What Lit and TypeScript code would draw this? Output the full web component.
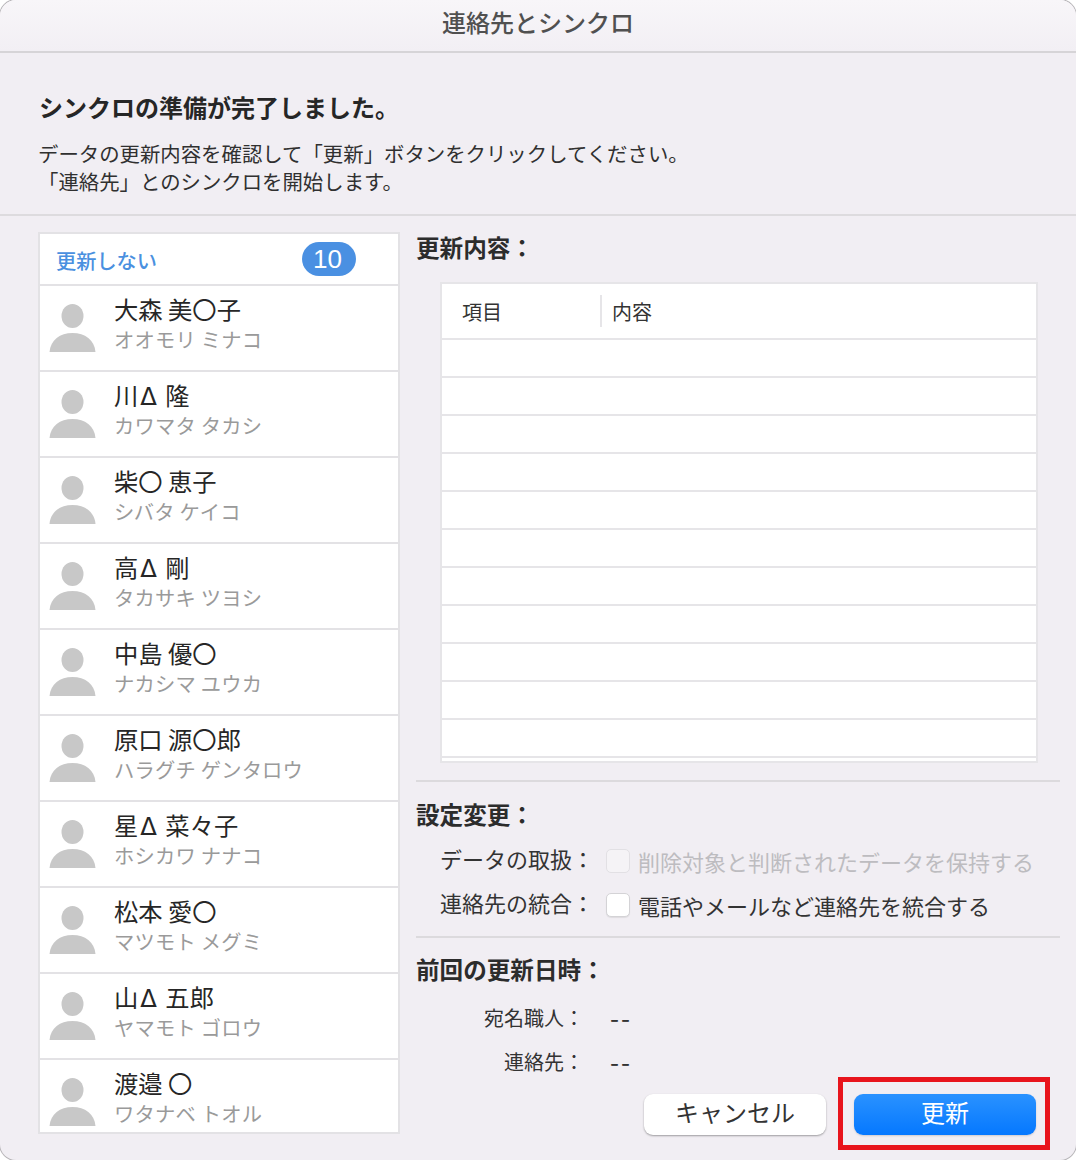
import { LitElement, html, css } from "lit";
import { customElement } from "lit/decorators.js";

const CONTACTS = [
  ["大森 美〇子", "オオモリ ミナコ"],
  ["川Δ 隆", "カワマタ タカシ"],
  ["柴〇 恵子", "シバタ ケイコ"],
  ["高Δ 剛", "タカサキ ツヨシ"],
  ["中島 優〇", "ナカシマ ユウカ"],
  ["原口 源〇郎", "ハラグチ ゲンタロウ"],
  ["星Δ 菜々子", "ホシカワ ナナコ"],
  ["松本 愛〇", "マツモト メグミ"],
  ["山Δ 五郎", "ヤマモト ゴロウ"],
  ["渡邉 〇", "ワタナベ トオル"],
];

@customElement("app-root")
export class AppRoot extends LitElement {
  static styles = css`
    :host {
      display: block;
      width: 1076px;
      height: 1160px;
      overflow: hidden;
      background: #fff;
      font-family: "Noto Sans CJK JP", "Liberation Sans", sans-serif;
      color: #262626;
    }
    .win {
      width: 1076px;
      height: 1160px;
      box-sizing: border-box;
      background: #f1eef3;
      border-radius: 16px;
      box-shadow: 0 0 0 1px #b8b6b9;
      overflow: hidden;
      display: flex;
      flex-direction: column;
    }
    .title {
      height: 53px;
      flex: none;
      box-sizing: border-box;
      border-bottom: 2px solid #d6d4d7;
      background: linear-gradient(#f8f6f9, #f2eff4);
      display: flex;
      align-items: center;
      justify-content: center;
      padding-bottom: 9px;
      font-size: 24px;
      font-weight: 500;
      color: #505050;
    }
    .intro {
      height: 163px;
      flex: none;
      box-sizing: border-box;
      padding: 40px 0 0 38px;
      border-bottom: 2px solid #dddbde;
    }
    .intro h1 {
      margin: 0 0 18px 1px;
      font-size: 24px;
      line-height: 28px;
      font-weight: 700;
      color: #262626;
    }
    .intro p {
      margin: 0;
      font-size: 20.4px;
      line-height: 28px;
      color: #303030;
    }
    .main {
      flex: 1;
      min-height: 0;
      display: flex;
      padding: 16px 16px 0 38px;
      gap: 16px;
    }
    .list {
      width: 362px;
      height: 902px;
      flex: none;
      box-sizing: border-box;
      border: 2px solid #e3e2e5;
      background: #fff;
      display: flex;
      flex-direction: column;
      overflow: hidden;
    }
    .list-head {
      height: 52px;
      flex: none;
      box-sizing: border-box;
      border-bottom: 2px solid #e3e2e5;
      padding: 0 42px 0 16px;
      display: flex;
      align-items: center;
      justify-content: space-between;
      font-size: 20.2px;
      font-weight: 500;
      color: #4a90e0;
    }
    .head-label {
      position: relative;
      top: 1px;
    }
    .badge {
      width: 54px;
      height: 34px;
      box-sizing: border-box;
      padding: 1px 3px 0 0;
      border-radius: 17px;
      background: #4a90e2;
      color: #fff;
      display: flex;
      align-items: center;
      justify-content: center;
      font-family: "Liberation Sans", sans-serif;
      font-weight: 400;
      font-size: 26px;
    }
    .row {
      height: 86px;
      flex: none;
      box-sizing: border-box;
      border-bottom: 2px solid #e3e2e5;
      display: flex;
      padding: 6px 0 0 9px;
      gap: 18px;
    }
    .row:last-child {
      border-bottom: 0;
    }
    .avatar {
      width: 47px;
      height: 48px;
      margin-top: 12px;
      flex: none;
    }
    .name {
      font-size: 24.3px;
      line-height: 34px;
      height: 34px;
      color: #262626;
    }
    .tri {
      font-family: "DejaVu Sans", sans-serif;
      line-height: 0;
      margin: 0 3px 0 2px;
    }
    .kana {
      font-size: 20.3px;
      line-height: 26px;
      color: #9a9a9a;
      letter-spacing: 0.2px;
    }
    .right {
      flex: 1;
      min-width: 0;
      display: flex;
      flex-direction: column;
    }
    h2 {
      margin: 0;
      font-size: 23.6px;
      line-height: 30px;
      font-weight: 700;
      color: #2c2c2c;
    }
    .table {
      margin: 20px 22px 0 24px;
      height: 481px;
      flex: none;
      box-sizing: border-box;
      border: 2px solid #e6e5e8;
      background: #fff;
      overflow: hidden;
    }
    .thead {
      height: 56px;
      box-sizing: border-box;
      border-bottom: 2px solid #e6e5e8;
      display: flex;
      align-items: center;
      font-size: 20px;
      color: #333;
    }
    .th1 {
      width: 160px;
      box-sizing: border-box;
      height: 32px;
      padding-left: 20px;
      border-right: 2px solid #e6e5e8;
      display: flex;
      align-items: center;
    }
    .th2 {
      padding-left: 10px;
    }
    .trow {
      height: 38px;
      box-sizing: border-box;
      border-bottom: 2px solid #e6e5e8;
    }
    .sep {
      height: 2px;
      flex: none;
      background: #dcdadd;
      margin-top: 17px;
    }
    .settings {
      padding-top: 17px;
    }
    .opts {
      margin-top: 10px;
    }
    .opt {
      display: flex;
      align-items: center;
      height: 44px;
      font-size: 22px;
      color: #333;
    }
    .opt .lab {
      width: 190px;
      padding-left: 24px;
      box-sizing: border-box;
      flex: none;
      white-space: nowrap;
      position: relative;
      top: -3px;
    }
    .opt .txt {
      margin-left: 8px;
      white-space: nowrap;
    }
    .box {
      width: 24px;
      height: 24px;
      box-sizing: border-box;
      border-radius: 5px;
      background: #fff;
      border: 1px solid #d4d3d6;
      box-shadow: 0 1px 1px rgba(0, 0, 0, 0.08);
      flex: none;
    }
    .dis .box {
      background: #f5f3f6;
      border-color: #e2e0e4;
      box-shadow: none;
    }
    .dis .txt {
      color: #bdbcc0;
    }
    .sep2 {
      height: 2px;
      flex: none;
      background: #dcdadd;
      margin-top: 9px;
    }
    .last {
      padding-top: 16px;
    }
    .kvs {
      margin-top: 11px;
    }
    .kv {
      display: flex;
      height: 44px;
      align-items: center;
      font-size: 20px;
      color: #333;
    }
    .kv .k {
      width: 168px;
      flex: none;
      text-align: right;
      white-space: nowrap;
    }
    .kv .v {
      margin-left: 26px;
      font-size: 26px;
      letter-spacing: 2px;
      line-height: 1;
    }
    .btns {
      position: relative;
      display: flex;
      justify-content: flex-end;
      gap: 28px;
      padding-right: 24px;
      margin-top: 11px;
    }
    .btn {
      width: 182px;
      height: 41px;
      border-radius: 9px;
      display: flex;
      align-items: center;
      justify-content: center;
      padding-bottom: 7px;
      font-size: 24px;
      box-sizing: border-box;
    }
    .cancel {
      background: #fff;
      color: #333;
      box-shadow: 0 1px 2px rgba(0, 0, 0, 0.35);
    }
    .ok {
      background: linear-gradient(#2a92ff, #0578ff);
      color: #fff;
      box-shadow: 0 1px 2px rgba(0, 0, 0, 0.15);
    }
    .hl {
      position: absolute;
      right: 10px;
      top: -17px;
      width: 212px;
      height: 73px;
      box-sizing: border-box;
      border: 5px solid #e8141c;
      pointer-events: none;
    }
  `;

  private avatar() {
    return html`<svg class="avatar" viewBox="0 0 47 48">
      <ellipse cx="23.5" cy="12" rx="11" ry="12" fill="#c8c8c8"></ellipse>
      <path d="M0.5 48C1.5 36 11 29 23.5 29S45.5 36 46.5 48Z" fill="#c8c8c8"></path>
    </svg>`;
  }

  private nameText(n: string) {
    const i = n.indexOf("Δ");
    if (i < 0) return n;
    return html`${n.slice(0, i)}<span class="tri">Δ</span>${n.slice(i + 1)}`;
  }

  render() {
    return html`<div class="win">
      <div class="title">連絡先とシンクロ</div>
      <div class="intro">
        <h1>シンクロの準備が完了しました。</h1>
        <p>データの更新内容を確認して「更新」ボタンをクリックしてください。<br />「連絡先」とのシンクロを開始します。</p>
      </div>
      <div class="main">
        <div class="list">
          <div class="list-head"><span class="head-label">更新しない</span><span class="badge">10</span></div>
          ${CONTACTS.map(
            ([n, k]) => html`<div class="row">
              ${this.avatar()}
              <div><div class="name">${this.nameText(n)}</div><div class="kana">${k}</div></div>
            </div>`
          )}
        </div>
        <div class="right">
          <h2>更新内容：</h2>
          <div class="table">
            <div class="thead"><div class="th1">項目</div><div class="th2">内容</div></div>
            ${Array.from({ length: 11 }, () => html`<div class="trow"></div>`)}
          </div>
          <div class="sep"></div>
          <div class="settings">
            <h2>設定変更：</h2>
            <div class="opts">
              <div class="opt dis"><span class="lab">データの取扱：</span><span class="box"></span><span class="txt">削除対象と判断されたデータを保持する</span></div>
              <div class="opt"><span class="lab">連絡先の統合：</span><span class="box"></span><span class="txt">電話やメールなど連絡先を統合する</span></div>
            </div>
          </div>
          <div class="sep2"></div>
          <div class="last">
            <h2>前回の更新日時：</h2>
            <div class="kvs">
              <div class="kv"><span class="k">宛名職人：</span><span class="v">--</span></div>
              <div class="kv"><span class="k">連絡先：</span><span class="v">--</span></div>
            </div>
          </div>
          <div class="btns">
            <div class="btn cancel">キャンセル</div>
            <div class="btn ok">更新</div>
            <div class="hl"></div>
          </div>
        </div>
      </div>
    </div>`;
  }
}
